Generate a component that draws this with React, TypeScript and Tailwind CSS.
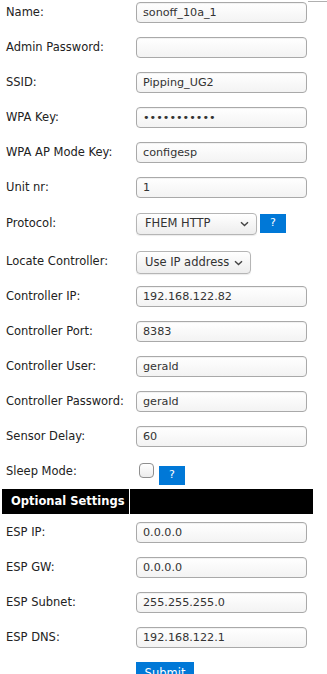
import React from 'react';

const font = { fontFamily: '"DejaVu Sans", Verdana, sans-serif' };

const inputCls =
  'h-[21px] w-[171px] rounded-[4px] border border-[#a9a9a9] bg-gradient-to-b from-[#ffffff] to-[#f3f3f3] px-[6px] text-[11.2px] text-[#333] shadow-[inset_0_1px_1px_rgba(0,0,0,0.06)] outline-none';

const Label = ({ children }: { children: React.ReactNode }) => (
  <div className="flex h-[21px] w-[136px] shrink-0 items-center whitespace-nowrap pl-[6px] text-[11.5px] text-[#222]">
    {children}
  </div>
);

const Field = ({ label, value, type = 'text' }: { label: string; value: string; type?: string }) => (
  <div className="flex h-[35px] items-start">
    <Label>{label}</Label>
    <input className={inputCls} style={font} type={type} value={value} readOnly />
  </div>
);

const Chevron = () => (
  <svg width="9" height="6" viewBox="0 0 9 6" className="shrink-0">
    <path d="M1 1.2 L4.5 4.6 L8 1.2" fill="none" stroke="#444" strokeWidth="1.4" />
  </svg>
);

const Select = ({ value, width }: { value: string; width: string }) => (
  <div
    className={`flex items-center justify-between whitespace-nowrap rounded-[4px] border border-[#b5b5b5] bg-gradient-to-b from-[#ffffff] to-[#ededed] pl-[8px] pr-[7px] text-[11.5px] text-[#333] shadow-[0_1px_1px_rgba(0,0,0,0.08)] ${width}`}
  >
    <span>{value}</span>
    <Chevron />
  </div>
);

const Help = ({ extra = '' }: { extra?: string }) => (
  <div className={`flex h-[19px] w-[26px] items-center justify-center bg-[#0078d7] text-[11px] text-white ${extra}`}>?</div>
);

export default function App() {
  return (
    <div className="min-h-[674px] w-[327px] overflow-hidden bg-white" style={font}>
      <div className="flex h-[2px]">
        <div className="ml-auto mt-px h-px w-[19px] bg-[#b0b0b0]" />
      </div>

      <Field label="Name:" value="sonoff_10a_1" />
      <Field label="Admin Password:" value="" type="password" />
      <Field label="SSID:" value="Pipping_UG2" />
      <Field label="WPA Key:" value="wpakeyvalue" type="password" />
      <Field label="WPA AP Mode Key:" value="configesp" />
      <Field label="Unit nr:" value="1" />

      <div className="flex h-[37px] items-start">
        <div className="mt-[1px]">
          <Label>Protocol:</Label>
        </div>
        <div className="mt-px flex items-start gap-[3px]">
          <Select value="FHEM HTTP" width="h-[22px] w-[121px]" />
          <Help extra="mt-[1px]" />
        </div>
      </div>

      <div className="flex h-[37px] items-start">
        <div className="mt-[2px]">
          <Label>Locate Controller:</Label>
        </div>
        <div className="mt-[2px]">
          <Select value="Use IP address" width="h-[23px] w-[115px]" />
        </div>
      </div>

      <Field label="Controller IP:" value="192.168.122.82" />
      <Field label="Controller Port:" value="8383" />
      <Field label="Controller User:" value="gerald" />
      <Field label="Controller Password:" value="gerald" />
      <Field label="Sensor Delay:" value="60" />

      <div className="flex h-[28px] items-start">
        <Label>Sleep Mode:</Label>
        <div className="flex items-start">
          <div className="ml-[3px] mt-[2px] h-[15px] w-[15px] rounded-[4px] border border-[#8f8f8f] bg-gradient-to-b from-[#ffffff] to-[#ececec]" />
          <Help extra="ml-[5px] mt-[5px] h-[18px] w-[25px]" />
        </div>
      </div>

      <div className="flex h-[25px] pl-[2px]">
        <div className="flex w-[127px] items-center whitespace-nowrap bg-black pl-[9px] text-[11.5px] font-bold text-white">
          Optional Settings
        </div>
        <div className="ml-[1px] w-[183px] bg-black" />
      </div>

      <div className="pt-[8px]">
        <Field label="ESP IP:" value="0.0.0.0" />
        <Field label="ESP GW:" value="0.0.0.0" />
        <Field label="ESP Subnet:" value="255.255.255.0" />
        <Field label="ESP DNS:" value="192.168.122.1" />
      </div>

      <div className="flex">
        <div className="w-[136px]" />
        <button className="h-[22px] w-[58px] bg-[#0078d7] pt-[1px] text-[11.5px] text-white" style={font}>
          Submit
        </button>
      </div>
    </div>
  );
}
